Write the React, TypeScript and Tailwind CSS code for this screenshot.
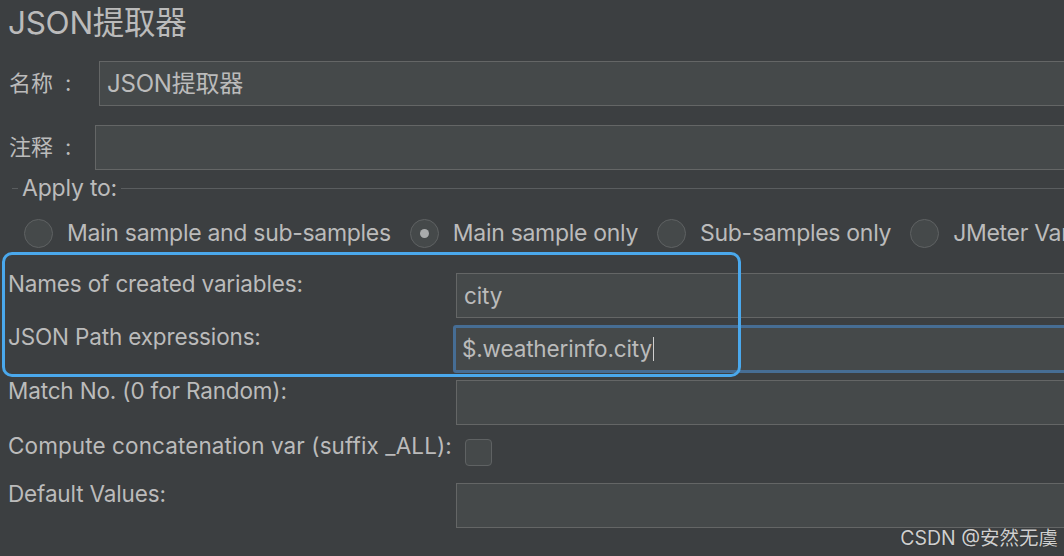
import React from "react";

const font = "font-['Inter','Noto_Sans_CJK_SC',sans-serif]";

function Radio({ label, checked = false }: { label: string; checked?: boolean }) {
  return (
    <div className="flex items-center gap-[14px] shrink-0">
      <span className="flex h-[29px] w-[29px] items-center justify-center rounded-full border border-[#5f6263] bg-[#45494a]">
        {checked && <span className="h-[9px] w-[9px] rounded-full bg-[#a9abac]" />}
      </span>
      <span>{label}</span>
    </div>
  );
}

function Field({ value, focused = false, cursor = false }: { value?: string; focused?: boolean; cursor?: boolean }) {
  return (
    <div
      className={
        focused
          ? "flex h-[48px] flex-1 items-center rounded-[3px] border-[3px] border-[#466d94] bg-[#45494a] pl-[6px] -mr-[20px]"
          : "flex h-[45px] flex-1 items-center border border-[#646666] bg-[#45494a] pl-[7px] -mr-[20px]"
      }
    >
      {value && (
        <span className="text-[22.5px]">
          {value}
          {cursor && <span className="ml-[1px] inline-block h-[24px] w-[1px] translate-y-[4px] bg-[#cfcfcf]" />}
        </span>
      )}
    </div>
  );
}

function CnLabel({ text, width }: { text: string; width: string }) {
  return (
    <span className={`flex items-center pl-[9px] text-[22px] ${width}`}>
      {text}
      <span className="ml-[12px]">:</span>
    </span>
  );
}

export default function App() {
  return (
    <div className={`relative h-[556px] w-[1064px] overflow-hidden bg-[#3c3f41] text-[#bbbbbb] ${font}`}>
      <div className="flex flex-col">
        <h1 className="ml-[8px] mt-[3px] h-[40px] text-[31.5px] leading-[40px] tracking-[-0.3px]">JSON提取器</h1>

        <div className="mt-[18px] flex items-center">
          <CnLabel text="名称" width="w-[99px]" />
          <div className="flex h-[45px] flex-1 items-center border border-[#646666] bg-[#45494a] pl-[7px] -mr-[20px]">
            <span className="text-[24px] tracking-[-0.2px]">JSON提取器</span>
          </div>
        </div>

        <div className="mt-[19px] flex items-center">
          <CnLabel text="注释" width="w-[95px]" />
          <div className="h-[45px] flex-1 border border-[#646666] bg-[#45494a] -mr-[20px]" />
        </div>

        <div className="mt-[3px] flex items-center pl-[12px]">
          <span className="h-[1px] w-[6px] bg-[#5a5d5f]" />
          <span className="px-[4px] text-[23px] leading-[30px] tracking-[-0.2px]">Apply to:</span>
          <span className="h-[1px] flex-1 bg-[#5a5d5f]" />
        </div>

        <div className="mt-[15px] flex h-[30px] items-center gap-[19px] whitespace-nowrap pl-[24px] text-[23px] tracking-[-0.3px]">
          <Radio label="Main sample and sub-samples" />
          <Radio label="Main sample only" checked />
          <Radio label="Sub-samples only" />
          <Radio label="JMeter Variable Name to use" />
        </div>

        <div className="mt-[25px] flex flex-col gap-[8px] text-[22.5px] tracking-[-0.15px]">
          <div className="flex items-start">
            <span className="w-[456px] pl-[8px] leading-[22px]">Names of created variables:</span>
            <Field value="city" />
          </div>
          <div className="-mt-[1px] flex items-start">
            <span className="w-[453px] pl-[8px] pt-[1px] leading-[22px]">JSON Path expressions:</span>
            <Field value="$.weatherinfo.city" focused cursor />
          </div>
          <div className="-mt-[1px] flex items-start">
            <span className="w-[456px] pl-[8px] leading-[22px]">Match No. (0 for Random):</span>
            <Field />
          </div>
          <div className="mt-[1px] flex h-[35px] items-start">
            <span className="w-[465px] pl-[8px] leading-[24px] tracking-[0.1px]">Compute concatenation var (suffix _ALL):</span>
            <span className="mt-[5px] h-[27px] w-[27px] rounded-[4px] border border-[#5f6263] bg-[#45494a]" />
          </div>
          <div className="mt-[6px] flex items-start">
            <span className="w-[456px] pl-[8px] leading-[22px]">Default Values:</span>
            <Field />
          </div>
        </div>
      </div>

      <div className="pointer-events-none absolute left-[2px] top-[252px] h-[125px] w-[739px] rounded-[10px] border-[3px] border-[#4aa8ec]" />

      <div className="absolute bottom-[6px] right-[6px] text-[19.5px] leading-[24px] text-[#cfcfcf] [text-shadow:0_0_1px_#222]">
        CSDN @安然无虞
      </div>
    </div>
  );
}
